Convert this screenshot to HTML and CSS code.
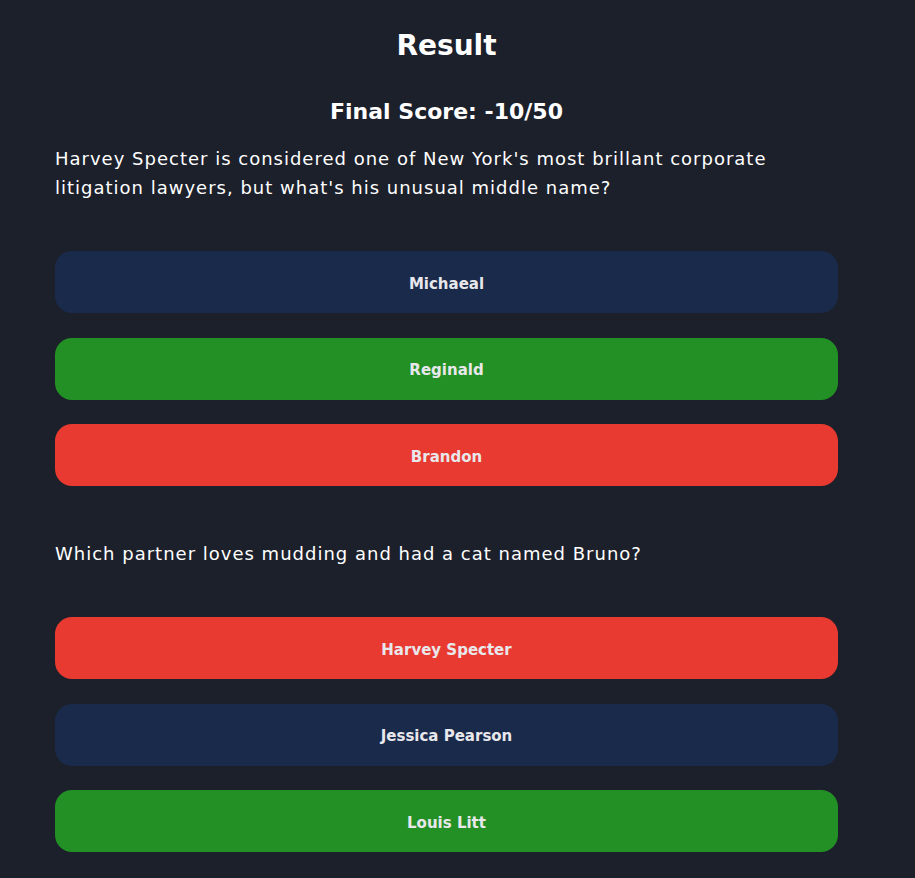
FILE: index.html
```html
<!DOCTYPE html>
<html lang="en">
<head>
<meta charset="utf-8">
<title>Result</title>
<link rel="stylesheet" href="styles.css">
</head>
<body>
<main class="result">
  <h1 class="title">Result</h1>
  <h2 class="score">Final Score: -10/50</h2>
  <section class="question">
    <p class="question-text">Harvey Specter is considered one of New York's most brillant corporate litigation lawyers, but what's his unusual middle name?</p>
    <div class="options">
      <div class="option option-neutral">Michaeal</div>
      <div class="option option-correct">Reginald</div>
      <div class="option option-wrong">Brandon</div>
    </div>
  </section>
  <section class="question">
    <p class="question-text">Which partner loves mudding and had a cat named Bruno?</p>
    <div class="options">
      <div class="option option-wrong">Harvey Specter</div>
      <div class="option option-neutral">Jessica Pearson</div>
      <div class="option option-correct">Louis Litt</div>
    </div>
  </section>
</main>
</body>
</html>
```
FILE: styles.css
```css
html, body {
  margin: 0;
  padding: 0;
  background: #1c202b;
}
body {
  font-family: "DejaVu Sans", "Open Sans", sans-serif;
  color: #ffffff;
}
.result {
  width: 783px;
  margin-left: 55px;
  padding-top: 27px;
}
.title {
  margin: 0;
  text-align: center;
  font-size: 28px;
  line-height: 38px;
  font-weight: 700;
}
.score {
  margin: 32px 0 0;
  text-align: center;
  font-size: 22px;
  line-height: 30px;
  font-weight: 700;
}
.question-text {
  margin: 0;
  font-size: 18px;
  line-height: 29px;
  font-weight: 400;
  letter-spacing: 1px;
}
.score + .question .question-text {
  margin-top: 17px;
}
.question + .question {
  margin-top: 53px;
}
.options {
  display: flex;
  flex-direction: column;
  gap: 24.5px;
  margin-top: 49px;
}
.option {
  height: 62px;
  box-sizing: border-box;
  padding-top: 3px;
  border-radius: 17px;
  display: flex;
  align-items: center;
  justify-content: center;
  font-size: 15px;
  font-weight: 700;
  color: #e8e8ec;
}
.option-neutral { background: #1a2a4b; }
.option-correct { background: #229024; }
.option-wrong { background: #e93a31; }
```
